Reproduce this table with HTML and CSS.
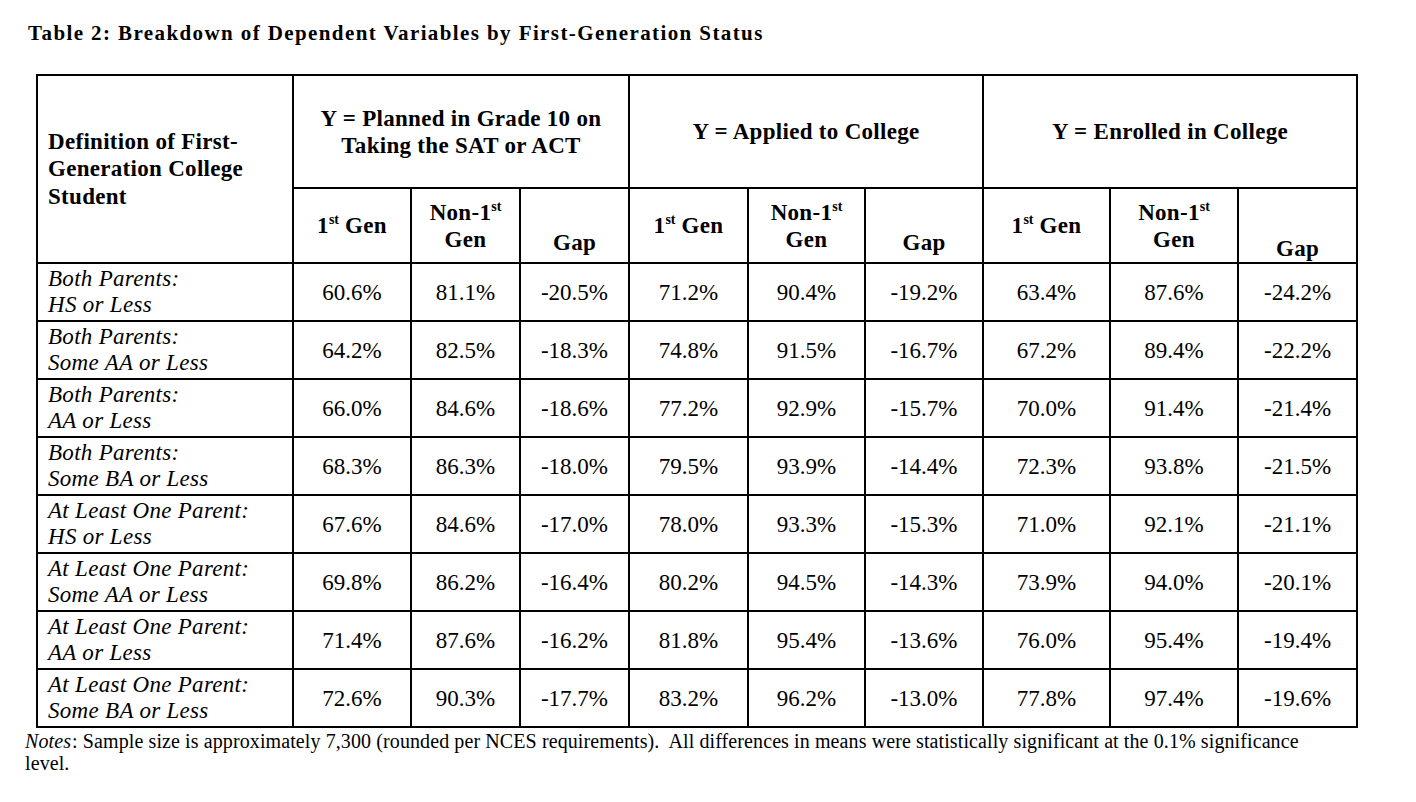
FILE: index.html
```html
<!DOCTYPE html>
<html lang="en">
<head>
<meta charset="utf-8">
<title>Table 2</title>
<link rel="stylesheet" href="styles.css">
</head>
<body>
<main class="page">
  <h1 class="title">Table 2: Breakdown of Dependent Variables by First-Generation Status</h1>
  <table class="data">
    <colgroup>
      <col class="c-def">
      <col class="c-a"><col class="c-b"><col class="c-c">
      <col class="c-d"><col class="c-e"><col class="c-f">
      <col class="c-g"><col class="c-h"><col class="c-i">
    </colgroup>
    <thead>
      <tr class="head1">
        <th rowspan="2" class="def-head">Definition of First-Generation College Student</th>
        <th colspan="3">Y = Planned in Grade 10 on<br>Taking the SAT or ACT</th>
        <th colspan="3">Y = Applied to College</th>
        <th colspan="3">Y = Enrolled in College</th>
      </tr>
      <tr class="head2">
        <th>1<sup>st</sup> Gen</th>
        <th>Non-1<sup>st</sup><br>Gen</th>
        <th class="gap">Gap</th>
        <th>1<sup>st</sup> Gen</th>
        <th>Non-1<sup>st</sup><br>Gen</th>
        <th class="gap">Gap</th>
        <th>1<sup>st</sup> Gen</th>
        <th>Non-1<sup>st</sup><br>Gen</th>
        <th class="gap gap-low">Gap</th>
      </tr>
    </thead>
    <tbody>
      <tr><th>Both Parents:<br>HS or Less</th><td>60.6%</td><td>81.1%</td><td>-20.5%</td><td>71.2%</td><td>90.4%</td><td>-19.2%</td><td>63.4%</td><td>87.6%</td><td>-24.2%</td></tr>
      <tr><th>Both Parents:<br>Some AA or Less</th><td>64.2%</td><td>82.5%</td><td>-18.3%</td><td>74.8%</td><td>91.5%</td><td>-16.7%</td><td>67.2%</td><td>89.4%</td><td>-22.2%</td></tr>
      <tr><th>Both Parents:<br>AA or Less</th><td>66.0%</td><td>84.6%</td><td>-18.6%</td><td>77.2%</td><td>92.9%</td><td>-15.7%</td><td>70.0%</td><td>91.4%</td><td>-21.4%</td></tr>
      <tr><th>Both Parents:<br>Some BA or Less</th><td>68.3%</td><td>86.3%</td><td>-18.0%</td><td>79.5%</td><td>93.9%</td><td>-14.4%</td><td>72.3%</td><td>93.8%</td><td>-21.5%</td></tr>
      <tr><th>At Least One Parent:<br>HS or Less</th><td>67.6%</td><td>84.6%</td><td>-17.0%</td><td>78.0%</td><td>93.3%</td><td>-15.3%</td><td>71.0%</td><td>92.1%</td><td>-21.1%</td></tr>
      <tr><th>At Least One Parent:<br>Some AA or Less</th><td>69.8%</td><td>86.2%</td><td>-16.4%</td><td>80.2%</td><td>94.5%</td><td>-14.3%</td><td>73.9%</td><td>94.0%</td><td>-20.1%</td></tr>
      <tr><th>At Least One Parent:<br>AA or Less</th><td>71.4%</td><td>87.6%</td><td>-16.2%</td><td>81.8%</td><td>95.4%</td><td>-13.6%</td><td>76.0%</td><td>95.4%</td><td>-19.4%</td></tr>
      <tr><th>At Least One Parent:<br>Some BA or Less</th><td>72.6%</td><td>90.3%</td><td>-17.7%</td><td>83.2%</td><td>96.2%</td><td>-13.0%</td><td>77.8%</td><td>97.4%</td><td>-19.6%</td></tr>
    </tbody>
  </table>
  <p class="notes"><em>Notes</em>: Sample size is approximately 7,300 (rounded per NCES requirements).&nbsp; All differences in means were statistically significant at the 0.1% significance level.</p>
</main>
</body>
</html>
```
FILE: styles.css
```css
html, body {
  margin: 0;
  padding: 0;
  background: #ffffff;
  color: #000000;
  font-family: "Liberation Serif", "Times New Roman", Times, serif;
}

.page {
  padding: 21px 0 0 28px;
  width: 1300px;
}

.title {
  margin: 0 0 29px 0;
  font-size: 21px;
  line-height: 24px;
  letter-spacing: 1.4px;
  font-weight: bold;
}

.data {
  margin-left: 8px;
  border-collapse: collapse;
  table-layout: fixed;
  width: 1320px;
  font-size: 23px;
  line-height: 27px;
}

.c-def { width: 256px; }
.c-a { width: 118px; }
.c-b { width: 109px; }
.c-c { width: 109px; }
.c-d { width: 119px; }
.c-e { width: 117px; }
.c-f { width: 118px; }
.c-g { width: 127px; }
.c-h { width: 128px; }
.c-i { width: 119px; }

.data th,
.data td {
  border: 2px solid #000000;
  padding: 0 4px;
  text-align: center;
  vertical-align: middle;
}

.data thead th {
  font-weight: bold;
  letter-spacing: 0.3px;
}

.head1 {
  height: 113px;
}

.data th.def-head {
  text-align: left;
  padding-left: 10px;
  line-height: 27.5px;
}

.head2 {
  height: 75px;
}

.head2 th.gap {
  vertical-align: bottom;
  padding-bottom: 6px;
}

.head2 th.gap-low {
  padding-bottom: 0;
}

.data tbody th {
  font-weight: normal;
  font-style: italic;
  letter-spacing: 0.3px;
  text-align: left;
  padding-left: 10px;
  line-height: 26px;
}

.data tbody tr {
  height: 58px;
}

.data sup {
  font-size: 14px;
  line-height: 0;
  letter-spacing: 0;
  vertical-align: 9px;
}

.notes {
  margin: 2px 0 0 -3px;
  font-size: 20px;
  line-height: 22px;
  letter-spacing: 0.1px;
  width: 1290px;
}

.notes em {
  margin-right: 1px;
}
```
